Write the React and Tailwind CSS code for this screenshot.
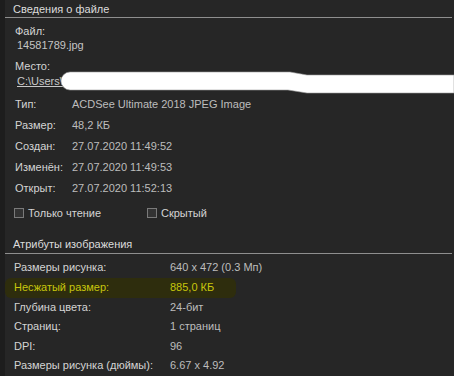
const info = [
  ["Тип:", "ACDSee Ultimate 2018 JPEG Image"],
  ["Размер:", "48,2 КБ"],
  ["Создан:", "27.07.2020 11:49:52"],
  ["Изменён:", "27.07.2020 11:49:53"],
  ["Открыт:", "27.07.2020 11:52:13"],
];

const attrs = [
  ["Размеры рисунка:", "640 x 472 (0.3 Мп)"],
  ["Несжатый размер:", "885,0 КБ", true],
  ["Глубина цвета:", "24-бит"],
  ["Страниц:", "1 страниц"],
  ["DPI:", "96"],
  ["Размеры рисунка (дюймы):", "6.67 x 4.92"],
];

const Check = ({ label }) => (
  <div className="flex items-center gap-[4px]">
    <span className="w-[10px] h-[10px] border border-[#7a7a7a] bg-[#333333]" />
    <span>{label}</span>
  </div>
);

const App = () => {
  return (
    <div
      className="relative w-[454px] h-[376px] overflow-hidden bg-[#262626] flex text-[11px] leading-[14px] text-[#d4d4d4]"
      style={{ fontFamily: '"Liberation Sans", Arial, sans-serif' }}
    >
      <div className="w-[5px] shrink-0 bg-[#1d1d1d]" />
      <div className="flex-1 flex flex-col">
        <div className="h-[18px] border-b border-[#8e8e8e] mr-[2px] pl-[8px] pt-[2px] text-[#dcdcdc]">
          Сведения о файле
        </div>

        <div className="mt-[6px] pl-[10px]">Файл:</div>
        <div className="pl-[12px] text-[#c4c4c4]">14581789.jpg</div>
        <div className="mt-[7px] pl-[10px]">Место:</div>
        <div className="mt-[1px] pl-[12px] text-[#c8c8c8] underline">C:\Users\</div>

        <div className="mt-[6px] flex flex-col">
          {info.map(([k, v]) => (
            <div key={k} className="h-[21px] leading-[21px] flex pl-[10px]">
              <span className="w-[57px] shrink-0">{k}</span>
              <span className="text-[#bdbdbd]">{v}</span>
            </div>
          ))}
        </div>

        <div className="mt-[7px] flex pl-[9px]">
          <div className="w-[133px]">
            <Check label="Только чтение" />
          </div>
          <Check label="Скрытый" />
        </div>

        <div className="mt-[17px] h-[18px] border-b border-[#8e8e8e] mr-[2px] pl-[8px] text-[#dcdcdc]">
          Атрибуты изображения
        </div>

        <div className="mt-[4px] flex flex-col">
          {attrs.map(([k, v, hl]) => (
            <div
              key={k}
              className={
                hl
                  ? "h-[19.6px] leading-[19.6px] flex pl-[9px] w-[231px] rounded-[6px] bg-[#2e2d0d] text-[#c8c60c]"
                  : "h-[19.6px] leading-[19.6px] flex pl-[9px]"
              }
            >
              <span className="w-[156px] shrink-0">{k}</span>
              <span className={hl ? "" : "text-[#bdbdbd]"}>{v}</span>
            </div>
          ))}
        </div>
      </div>

      {/* white redaction scribble over the path */}
      <svg className="absolute left-0 top-0" width="454" height="376" viewBox="0 0 454 376">
        <path
          d="M70 72 L290 72 L307 75 L454 75 L454 93 L307 93 L288 90 L70 90 A9 9 0 0 1 70 72 Z"
          fill="#ffffff"
          stroke="#9a9a9a"
          strokeWidth="0.6"
        />
      </svg>
    </div>
  );
};

export default App;
